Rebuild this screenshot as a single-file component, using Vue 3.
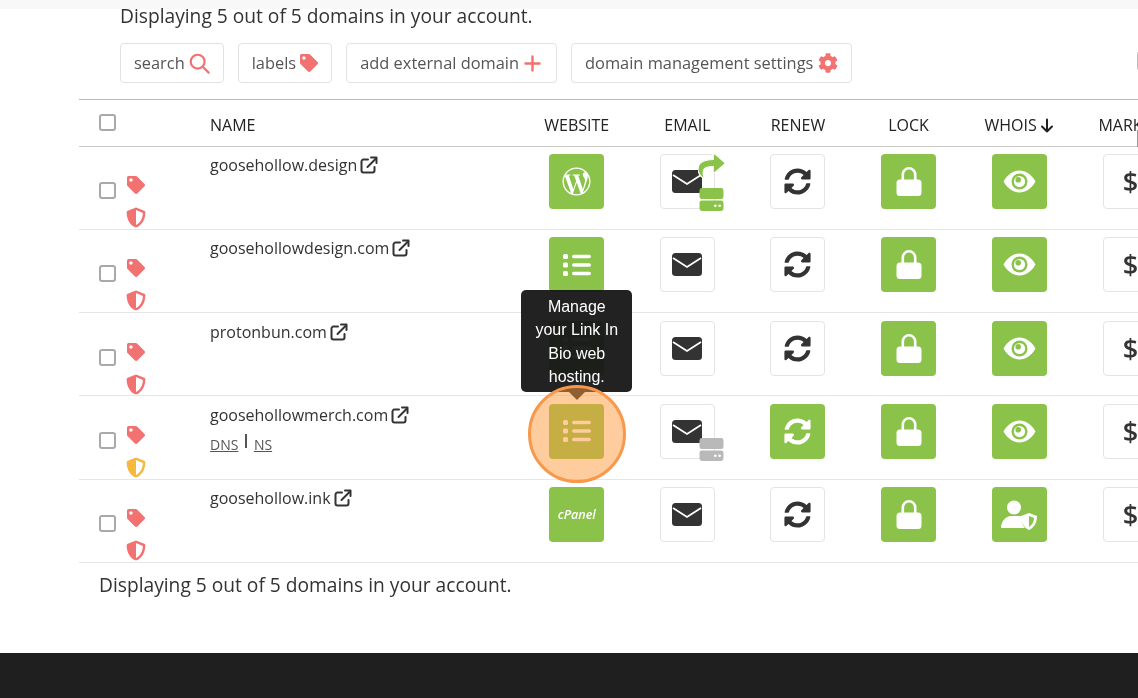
<script setup>
const sync = 'M370.72 133.28C339.458 104.008 298.888 87.962 255.848 88c-77.458.068-144.328 53.178-162.791 126.85-1.344 5.363-6.122 9.15-11.651 9.15H24.103c-7.498 0-13.194-6.807-11.807-14.176C33.933 94.924 134.813 8 256 8c66.448 0 126.791 26.136 171.315 68.685L463.03 40.97C478.149 25.851 504 36.559 504 57.941V192c0 13.255-10.745 24-24 24H345.941c-21.382 0-32.09-25.851-16.971-40.971l41.75-41.749zM32 296h134.059c21.382 0 32.09 25.851 16.971 40.971l-41.75 41.75c31.262 29.273 71.835 45.319 114.876 45.28 77.418-.07 144.315-53.144 162.787-126.849 1.344-5.363 6.122-9.15 11.651-9.15h57.304c7.498 0 13.194 6.807 11.807 14.176C478.067 417.076 377.187 504 256 504c-66.448 0-126.791-26.136-171.315-68.685L48.97 471.03C33.851 486.149 8 475.441 8 454.059V320c0-13.255 10.745-24 24-24z'
const tag = 'M0 252.118V48C0 21.49 21.49 0 48 0h204.118a48 48 0 0 1 33.941 14.059l211.882 211.882c18.745 18.745 18.745 49.137 0 67.882L293.823 497.941c-18.745 18.745-49.137 18.745-67.882 0L14.059 286.059A48 48 0 0 1 0 252.118zM112 64c-26.51 0-48 21.49-48 48s21.49 48 48 48 48-21.49 48-48-21.49-48-48-48z'
const shield = 'M466.5 83.7l-192-80a48.15 48.15 0 0 0-36.9 0l-192 80C27.7 91.1 16 108.6 16 128c0 198.5 114.5 335.7 221.5 380.3 11.8 4.9 25.1 4.9 36.9 0C360.1 472.6 496 349.3 496 128c0-19.4-11.7-36.9-29.5-44.3zM256.1 446.3l-.1-381 175.9 73.3c-3.3 151.4-82.1 261.1-175.8 307.7z'
const cog = 'M487.4 315.7l-42.6-24.6c4.3-23.2 4.3-47 0-70.2l42.6-24.6c4.9-2.8 7.1-8.6 5.5-14-11.1-35.6-30-67.8-54.7-94.6-3.8-4.1-10-5.1-14.8-2.3L380.8 110c-17.9-15.4-38.5-27.3-60.8-35.1V25.8c0-5.6-3.9-10.5-9.4-11.7-36.7-8.2-74.3-7.8-109.2 0-5.5 1.2-9.4 6.1-9.4 11.7V75c-22.2 7.9-42.8 19.8-60.8 35.1L88.7 85.5c-4.9-2.8-11-1.9-14.8 2.3-24.7 26.7-43.6 58.9-54.7 94.6-1.7 5.4.6 11.2 5.5 14L67.3 221c-4.3 23.2-4.3 47 0 70.2l-42.6 24.6c-4.9 2.8-7.1 8.6-5.5 14 11.1 35.6 30 67.8 54.7 94.6 3.8 4.1 10 5.1 14.8 2.3l42.6-24.6c17.9 15.4 38.5 27.3 60.8 35.1v49.2c0 5.6 3.9 10.5 9.4 11.7 36.7 8.2 74.3 7.8 109.2 0 5.5-1.2 9.4-6.1 9.4-11.7v-49.2c22.2-7.9 42.8-19.8 60.8-35.1l42.6 24.6c4.9 2.8 11 1.9 14.8-2.3 24.7-26.7 43.6-58.9 54.7-94.6 1.5-5.5-.7-11.3-5.6-14.1zM256 336c-44.1 0-80-35.9-80-80s35.9-80 80-80 80 35.9 80 80-35.9 80-80 80z'
const wp = 'M256 8C119.3 8 8 119.2 8 256c0 136.7 111.3 248 248 248s248-111.3 248-248C504 119.2 392.7 8 256 8zM33 256c0-32.3 6.9-63 19.3-90.7l106.4 291.4C84.3 420.5 33 344.2 33 256zm223 223c-21.9 0-43-3.2-63-9.1l66.9-194.4 68.5 187.8c.5 1.1 1 2.1 1.6 3.1-23.1 8.1-48 12.6-74 12.6zm30.7-327.5c13.4-.7 25.5-2.1 25.5-2.1 12-1.4 10.6-19-1.4-18.3 0 0-36.1 2.8-59.4 2.8-21.9 0-58.7-2.8-58.7-2.8-12-.7-13.4 17.6-1.4 18.3 0 0 11.4 1.4 23.4 2.1l34.7 95.2L200.6 393l-81.2-241.5c13.4-.7 25.5-2.1 25.5-2.1 12-1.4 10.6-19-1.4-18.3 0 0-36.1 2.8-59.4 2.8-4.2 0-9.1-.1-14.4-.3C109.6 73 178.1 33 256 33c58 0 110.9 22.2 150.6 58.5-1-.1-1.9-.2-2.9-.2-21.9 0-37.4 19.1-37.4 39.6 0 18.3 10.6 33.9 21.9 52.2 8.5 14.8 18.3 33.9 18.3 61.5 0 19.1-7.3 41.2-17 72.1l-22.2 74.3-80.7-239.6zm81.4 297.2l68.1-196.9c12.7-31.8 17-57.2 17-79.9 0-8.2-.5-15.8-1.5-22.9 17.4 31.8 27.3 68.2 27.3 107 0 82.3-44.6 154.1-110.9 192.7z'
const share = 'M503.691 189.836L327.687 37.851C312.281 24.546 288 35.347 288 56.015v80.053C127.371 137.907 0 170.1 0 322.326c0 61.441 39.581 122.309 83.333 154.132 13.653 9.931 33.111-2.533 28.077-18.631C66.066 312.814 132.917 274.316 288 272.085V360c0 20.7 24.3 31.453 39.687 18.164l176.004-152c11.071-9.562 11.086-26.753 0-36.328z'

const actions = [
  { label: 'search', icon: 'search' },
  { label: 'labels', icon: 'tag' },
  { label: 'add external domain', icon: 'plus' },
  { label: 'domain management settings', icon: 'cog' }
]
const cols = ['WEBSITE', 'EMAIL', 'RENEW', 'LOCK']
const rows = [
  { name: 'goosehollow.design', site: 'wp', forward: true, server: 'green', renew: false, shield: 'red', whois: 'eye' },
  { name: 'goosehollowdesign.com', site: 'list', renew: false, shield: 'red', whois: 'eye' },
  { name: 'protonbun.com', site: 'list', renew: false, shield: 'red', whois: 'eye' },
  { name: 'goosehollowmerch.com', site: 'list', server: 'gray', renew: true, dns: true, shield: 'amber', whois: 'eye', active: true },
  { name: 'goosehollow.ink', site: 'cpanel', renew: false, shield: 'red', whois: 'user' }
]
</script>

<template>
  <div class="page">
    <div class="strip"></div>
    <p class="count top">Displaying 5 out of 5 domains in your account.</p>

    <div class="toolbar">
      <button v-for="a in actions" :key="a.label" class="action" type="button">
        <span class="action-label">{{ a.label }}</span>
        <svg v-if="a.icon === 'search'" width="21" height="21" viewBox="0 0 23 23" fill="none" stroke="#f27272" stroke-width="2.4" stroke-linecap="round"><circle cx="9.5" cy="9.5" r="7.6"/><path d="M15 15l6.5 6.5"/></svg>
        <svg v-else-if="a.icon === 'tag'" width="18" height="18" viewBox="0 0 512 512" fill="#f27272"><path :d="tag"/></svg>
        <svg v-else-if="a.icon === 'plus'" class="plus" width="17" height="17" viewBox="0 0 17 17" fill="none" stroke="#f27272" stroke-width="2.4" stroke-linecap="round"><path d="M8.500 1.500v14M1.500 8.500h14"/></svg>
        <svg v-else class="gear" width="20" height="20" viewBox="0 0 512 512" fill="#f27272"><path :d="cog"/></svg>
      </button>
    </div>

    <div class="table">
      <div class="grid head">
        <div class="c-check"><input type="checkbox" class="check" aria-label="select all" /></div>
        <div>NAME</div>
        <div v-for="c in cols" :key="c" class="center">{{ c }}</div>
        <div class="center whois-h">WHOIS
          <svg width="14" height="15" viewBox="0 0 14 15" fill="none" stroke="#222" stroke-width="2" stroke-linecap="round" stroke-linejoin="round"><path d="M7 1.500v12M2 8.500l5 5 5-5"/></svg>
        </div>
        <div class="market">MARKET</div>
      </div>

      <div v-for="r in rows" :key="r.name" class="grid row">
        <div class="c-check">
          <input type="checkbox" class="check row-check" :aria-label="r.name" />
          <div class="flags">
            <svg width="18" height="18" viewBox="0 0 512 512" fill="#f27272"><path :d="tag"/></svg>
            <svg class="shield" width="20" height="21" viewBox="0 0 512 512" :fill="r.shield === 'amber' ? '#f5b93e' : '#f27272'"><path :d="shield"/></svg>
          </div>
        </div>

        <div class="name">
          <div class="domain">
            {{ r.name }}
            <svg width="18" height="18" viewBox="0 0 18 18" fill="none" stroke="#333" stroke-width="2" stroke-linecap="round" stroke-linejoin="round"><path d="M8 3.500H3.500a2 2 0 0 0-2 2v9a2 2 0 0 0 2 2h9a2 2 0 0 0 2-2V11"/><path d="M7.500 11L16 2.500"/><path d="M11 1.500h5.500V7" /></svg>
          </div>
          <div v-if="r.dns" class="dns"><a>DNS</a><i></i><a>NS</a></div>
        </div>

        <div class="center">
          <div class="cell-wrap">
            <div class="tile green">
              <svg v-if="r.site === 'wp'" width="29" height="29" viewBox="0 0 512 512" fill="#fff"><path :d="wp"/></svg>
              <svg v-else-if="r.site === 'list'" width="28" height="22" viewBox="0 0 28 22" fill="#fff"><rect x="0" y="0" width="5" height="5" rx="1.500"/><rect x="0" y="8.500" width="5" height="5" rx="1.500"/><rect x="0" y="17" width="5" height="5" rx="1.500"/><rect x="9" y="0.700" width="19" height="3.600" rx="1.800"/><rect x="9" y="9.200" width="19" height="3.600" rx="1.800"/><rect x="9" y="17.700" width="19" height="3.600" rx="1.800"/></svg>
              <span v-else class="cpanel">cPanel</span>
            </div>
            <template v-if="r.active">
              <div class="tooltip">Manage your Link In Bio web hosting.</div>
              <div class="ring"></div>
            </template>
          </div>
        </div>

        <div class="center">
          <div class="tile plain">
            <svg width="30" height="23" viewBox="0 0 30 23"><rect width="30" height="23" rx="3.500" fill="#333"/><path d="M1 5l14 9 14-9" fill="none" stroke="#fff" stroke-width="1.800"/></svg>
            <svg v-if="r.forward" class="badge-arrow" width="27" height="26" viewBox="0 0 512 480" fill="#8bc34a" stroke="#fff" stroke-width="22"><path :d="share"/></svg>
            <svg v-if="r.server" class="badge-server" width="25" height="23" viewBox="0 0 26 24" :fill="r.server === 'green' ? '#8bc34a' : '#b9b9b9'"><rect x="0.500" width="25" height="11.500" rx="2.500"/><rect x="0.500" y="13" width="25" height="11" rx="2.500"/><circle cx="17" cy="18.500" r="1.400" fill="#fff"/><circle cx="21.500" cy="18.500" r="1.400" fill="#fff"/></svg>
          </div>
        </div>

        <div class="center">
          <div class="tile" :class="r.renew ? 'green' : 'plain'">
            <svg width="27" height="27" viewBox="0 0 512 512" :fill="r.renew ? '#fff' : '#333'"><path :d="sync"/></svg>
          </div>
        </div>

        <div class="center">
          <div class="tile green">
            <svg width="26" height="29" viewBox="0 0 26 29"><path d="M6.800 14V7.500a6.200 6.200 0 0 1 12.400 0V14" fill="none" stroke="#fff" stroke-width="2.600"/><rect x="0.500" y="12.500" width="25" height="16.500" rx="3.500" fill="#fff"/></svg>
          </div>
        </div>

        <div class="center">
          <div class="tile green">
            <svg v-if="r.whois === 'eye'" width="33" height="23" viewBox="0 0 33 23"><path d="M0.500 11.500C5 4 10.500 0.500 16.500 0.500S28 4 32.500 11.500C28 19 22.500 22.500 16.500 22.500S5 19 0.500 11.500z" fill="#fff"/><circle cx="16.500" cy="11.500" r="8" fill="#8bc34a"/><circle cx="16.500" cy="11.500" r="5.600" fill="#fff"/><circle cx="15.200" cy="9.800" r="2.800" fill="#8bc34a"/></svg>
            <svg v-else width="36" height="30" viewBox="0 0 36 30"><circle cx="13" cy="7.500" r="7" fill="#fff"/><path d="M0 28c0-7 5-12 10-12h7c2 0 3.500 .5 4 1v3c0 3 1 6 3 8z" fill="#fff"/><path d="M28 13l-8 3c0 7 3 11.500 8 14 5-2.500 8-7 8-14z" fill="#fff"/><path d="M28 16v11c3-2 5-5 5-9z" fill="#8bc34a"/></svg>
          </div>
        </div>

        <div class="market-cell">
          <div class="tile plain"><span class="dollar">$</span></div>
        </div>
      </div>
    </div>

    <p class="count bottom">Displaying 5 out of 5 domains in your account.</p>

    <footer class="foot"></footer>
    <div class="edge-arc"></div>
    <div class="edge-line"></div>
  </div>
</template>

<style>
html, body { margin: 0; background: #fff; overflow: hidden; }
</style>

<style scoped>
.page {
  position: relative;
  width: 1138px;
  height: 698px;
  overflow: hidden;
  display: flex;
  flex-direction: column;
  background: #fff;
  color: #333;
  font-family: "Open Sans", "Liberation Sans", sans-serif;
  filter: blur(0.45px);
}
.strip {
  height: 9px;
  flex: none;
  background: #f8f8f8;
}
.count {
  margin: 0;
  font-size: 19.2px;
  color: #333;
}
.count.top { padding-left: 120px; line-height: 14px; }
.count.bottom { padding-left: 99px; line-height: 24px; margin-top: 10px; }

.toolbar {
  display: flex;
  gap: 14px;
  padding-left: 120px;
  margin-top: 20px;
}
.action {
  height: 40px;
  box-sizing: border-box;
  display: flex;
  align-items: center;
  gap: 4px;
  padding: 0 13px;
  background: #fff;
  border: 1px solid #e2e2e2;
  border-radius: 4px;
  font: 16.4px "Open Sans", sans-serif;
  color: #555;
}
.action-label { margin-top: -2px; }
.plus { margin: 0 2px 0 1px; }
.gear { margin-left: 1px; }

.table {
  margin-top: 16px;
  margin-left: 79px;
  width: 1100px;
  border-top: 1.5px solid #b9b9b9;
}
.grid {
  display: grid;
  grid-template-columns: 131px 311.5px repeat(6, 110.6px);
}
.head {
  height: 46.5px;
  align-items: center;
  font-size: 16px;
  color: #222;
  border-bottom: 1.5px solid #c9c9c9;
  box-sizing: border-box;
  padding-top: 5px;
}
.center { display: flex; justify-content: center; }
.whois-h { align-items: center; gap: 3px; }
.market { padding-left: 24px; white-space: nowrap; }
.c-check { padding-left: 20px; display: flex; }
.head .c-check { margin-top: -5px; }
.check {
  appearance: none;
  margin: 0;
  width: 17px;
  height: 17px;
  box-sizing: border-box;
  border: 2px solid #a9a9a9;
  border-radius: 3px;
  background: #fff;
  flex: none;
}
.row {
  height: 83.3px;
  box-sizing: border-box;
  padding-top: 7.500px;
  border-bottom: 1.5px solid #e6e6e6;
}
.row-check { margin-top: 28px; }
.flags {
  display: flex;
  flex-direction: column;
  margin: 22px 0 0 11px;
}
.shield { margin-top: 13px; margin-left: -1px; }
.domain {
  display: flex;
  align-items: center;
  gap: 3px;
  font-size: 16px;
  line-height: 22px;
  color: #333;
}
.dns {
  display: flex;
  align-items: center;
  margin-top: 9px;
  font-size: 14px;
  color: #555;
}
.dns a { text-decoration: underline; }
.dns i {
  width: 1.5px;
  height: 14px;
  background: #555;
  margin: -6px 7px 0;
}
.cell-wrap { position: relative; width: 55px; height: 55px; }
.tile {
  position: relative;
  width: 55px;
  height: 55px;
  box-sizing: border-box;
  border-radius: 4px;
  display: flex;
  align-items: center;
  justify-content: center;
  flex: none;
}
.green { background: #8bc34a; }
.plain { background: #fff; border: 1.5px solid #e4e4e4; }
.cpanel {
  font: italic 600 12.500px "Open Sans", sans-serif;
  color: #fff;
}
.badge-arrow { position: absolute; left: 37px; top: -3px; }
.badge-server { position: absolute; left: 38px; top: 33px; }
.tooltip {
  position: absolute;
  z-index: 5;
  left: -28px;
  bottom: 67px;
  width: 111px;
  height: 102px;
  box-sizing: border-box;
  padding: 5px 10px;
  background: rgba(22, 22, 22, 0.95);
  border-radius: 5px;
  color: #fff;
  font: 16px/23.5px "Liberation Sans", sans-serif;
  text-align: center;
}
.tooltip::after {
  content: "";
  position: absolute;
  left: 47.500px;
  top: 100%;
  border: 8px solid transparent;
  border-bottom: 0;
  border-top-color: rgba(22, 22, 22, 0.95);
}
.ring {
  position: absolute;
  z-index: 6;
  left: -21.500px;
  top: -19px;
  width: 98px;
  height: 98px;
  box-sizing: border-box;
  border: 3.500px solid #f7984a;
  border-radius: 50%;
  background: rgba(255, 154, 60, 0.5);
}
.market-cell { padding-left: 28.500px; }
.dollar { font-size: 27px; font-weight: 600; color: #333; }
.foot {
  margin-top: auto;
  height: 45px;
  flex: none;
  background: #1f1f1f;
}
.edge-arc {
  position: absolute;
  right: -13px;
  top: 48px;
  width: 12px;
  height: 24px;
  border: 1.500px solid #bbb;
  border-radius: 8px;
}
.edge-line {
  position: absolute;
  right: 0;
  top: 130px;
  width: 1px;
  height: 17px;
  background: #999;
}
</style>
